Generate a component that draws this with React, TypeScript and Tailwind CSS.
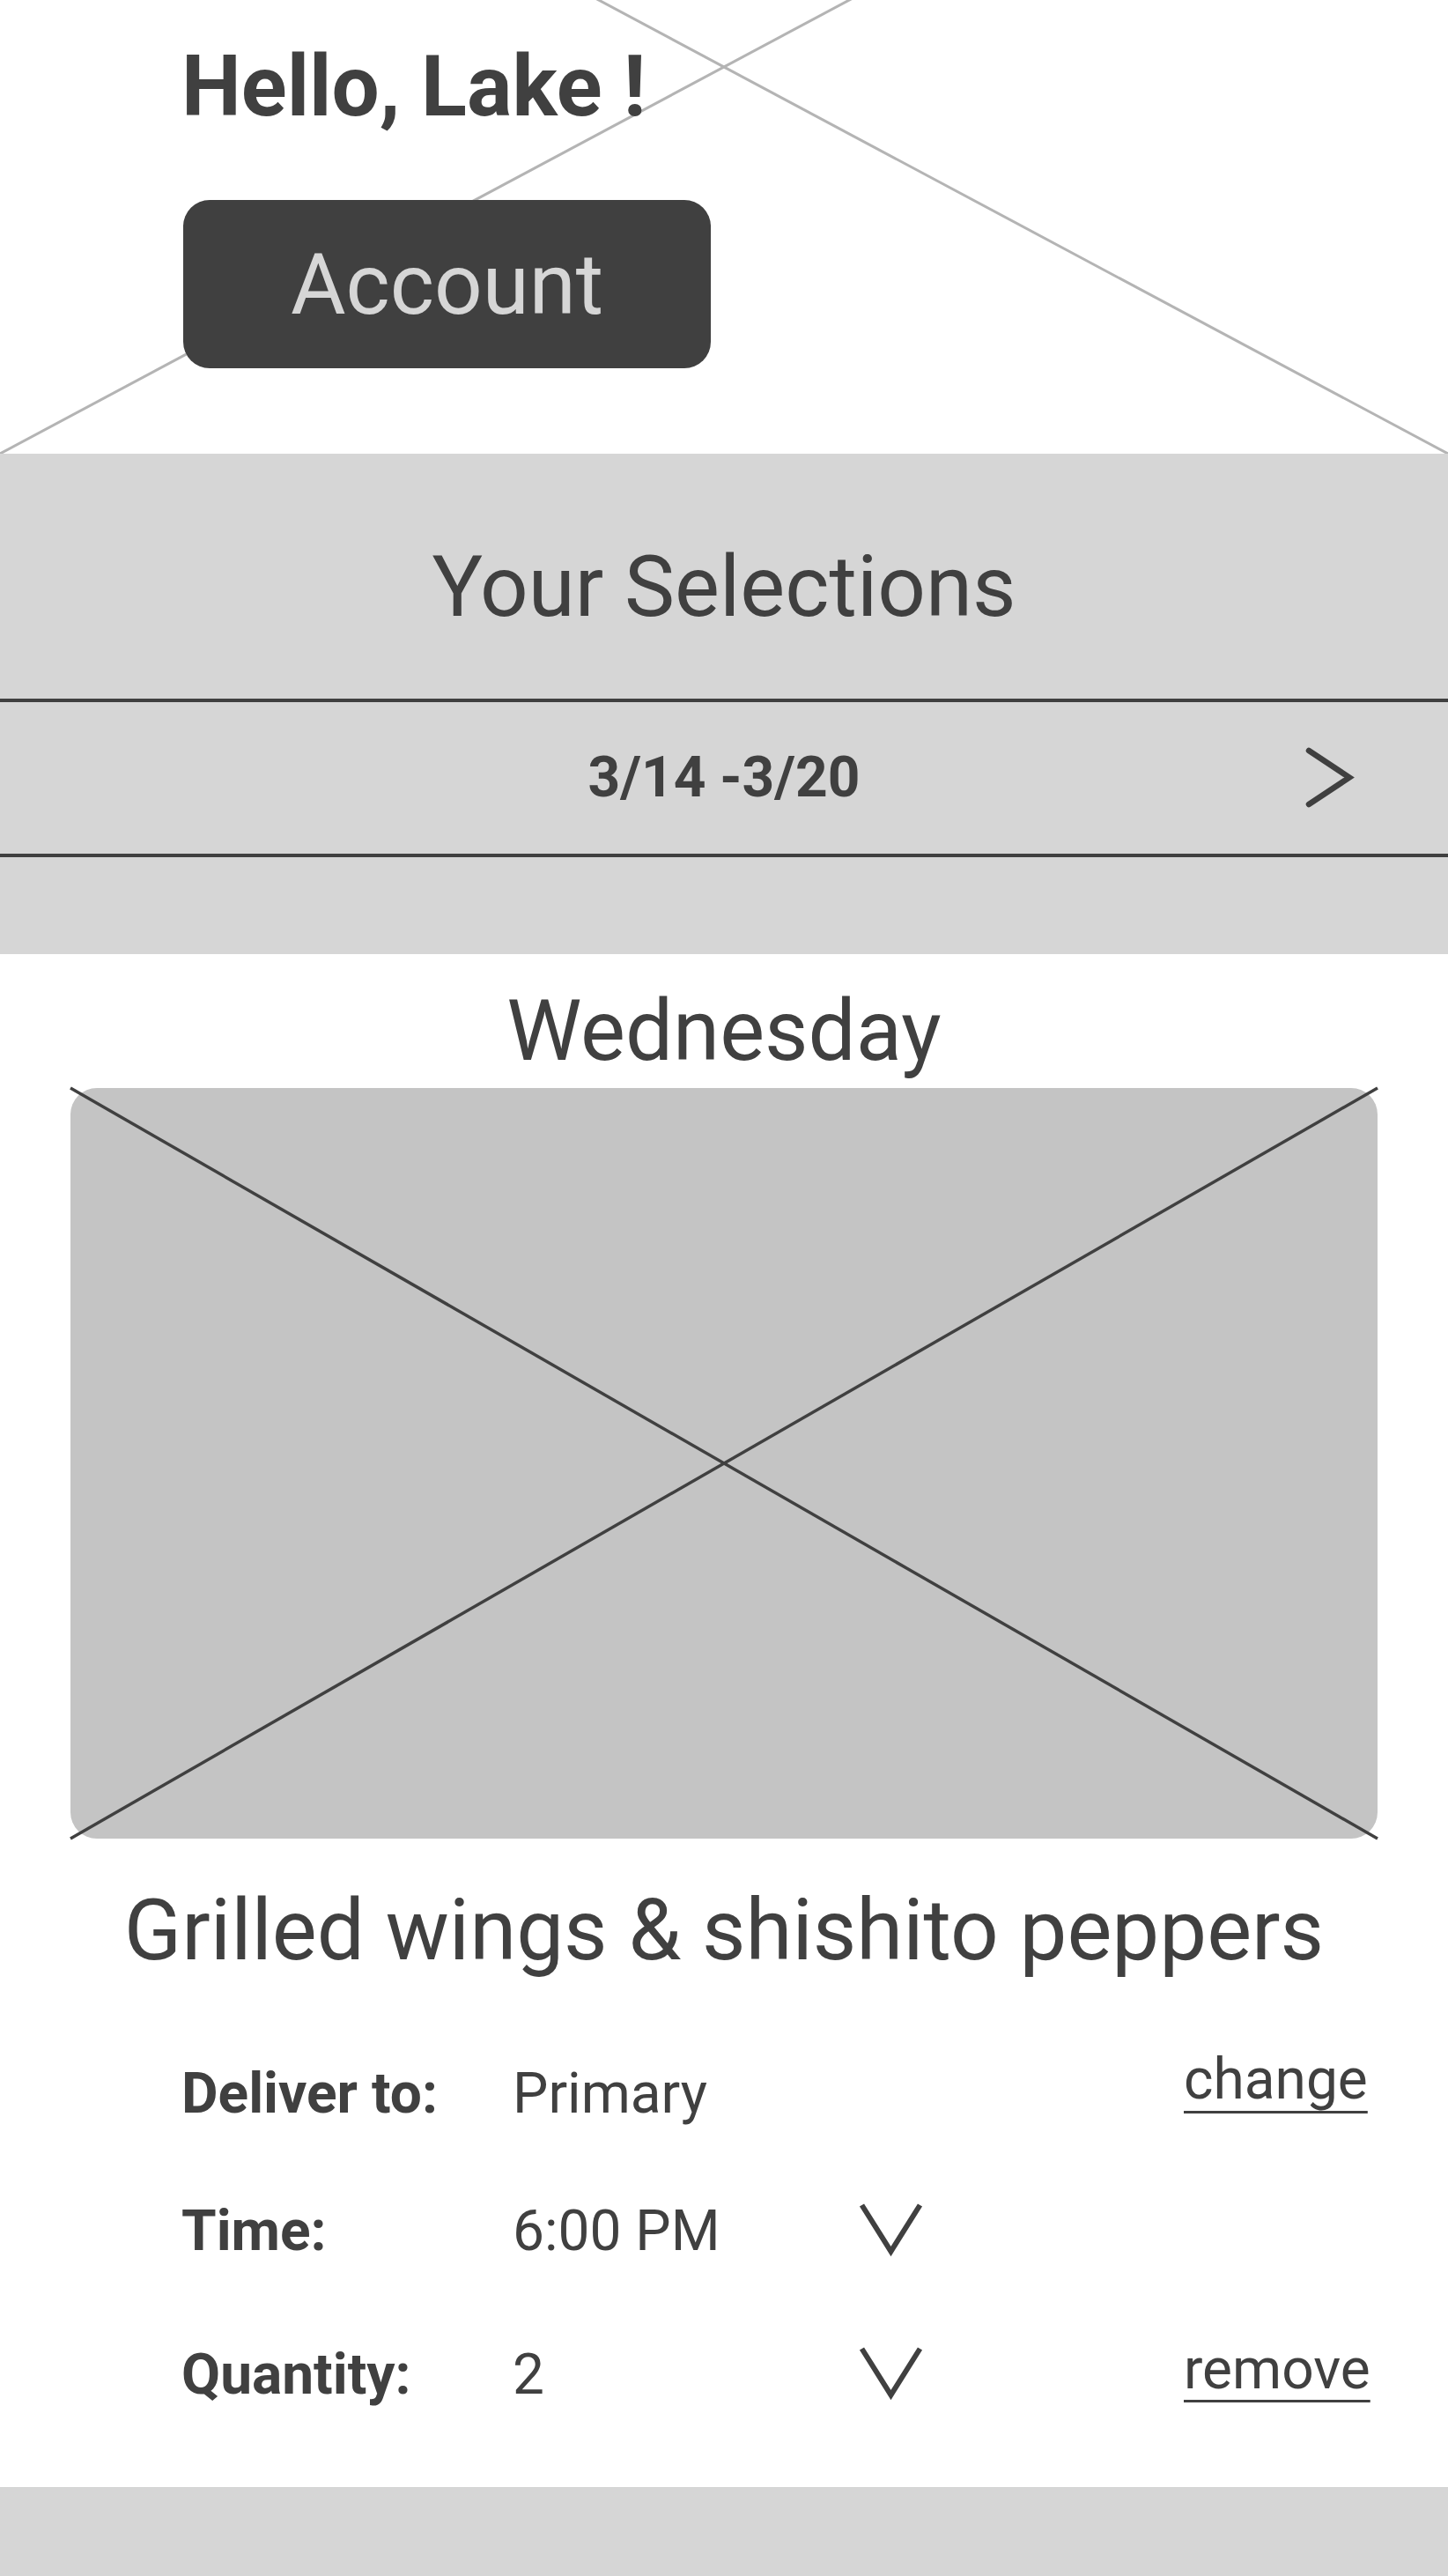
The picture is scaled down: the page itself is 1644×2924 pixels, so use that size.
import React from "react";

const font = { fontFamily: "Roboto, 'Open Sans', sans-serif" };

function ChevronDown() {
  return (
    <svg width="73" height="58" viewBox="0 0 73 58" className="mt-[2px] shrink-0 overflow-visible">
      <polyline points="3.5,0 36.5,52.5 69.5,0" fill="none" stroke="#404040" strokeWidth="6" strokeLinejoin="miter" strokeLinecap="butt" />
    </svg>
  );
}

export default function App() {
  return (
    <div className="w-[1644px] bg-white text-[#404040]" style={font}>
      {/* Header */}
      <div className="relative h-[515px] overflow-hidden bg-white">
        <svg className="absolute inset-0 h-full w-full" viewBox="0 0 1644 515" preserveAspectRatio="none">
          <line x1="0" y1="-363" x2="1644" y2="515" stroke="#b4b4b4" strokeWidth="3" />
          <line x1="1644" y1="-363" x2="0" y2="515" stroke="#b4b4b4" strokeWidth="3" />
        </svg>
        <div className="relative flex flex-col items-start pl-[206px] pt-[50px]">
          <h1 className="text-[96px] font-bold leading-none">Hello, Lake !</h1>
          <button className="ml-[2px] mt-[81px] flex h-[191px] w-[599px] items-center justify-center rounded-[30px] bg-[#404040] text-[96px] leading-none text-[#d6d6d6]">
            Account
          </button>
        </div>
      </div>

      {/* Selections */}
      <div className="flex flex-col bg-[#d6d6d6]">
        <h2 className="pt-[103px] text-center text-[96px] leading-none">Your Selections</h2>
        <div className="mt-[79px] grid h-[180px] grid-cols-[1fr_auto_1fr] items-center border-y-4 border-[#404040]">
          <div />
          <div className="text-[64px] font-bold leading-none">3/14 -3/20</div>
          <div className="flex justify-end">
            <svg width="60" height="76" viewBox="0 0 60 76" className="mr-[104px]">
              <polyline points="6,7 52,37.5 6,68" fill="none" stroke="#404040" strokeWidth="6.5" strokeLinecap="round" strokeLinejoin="miter" />
            </svg>
          </div>
        </div>
        <div className="h-[110px]" />
      </div>

      {/* Day */}
      <div className="flex flex-col">
        <h3 className="mt-[39px] text-center text-[96px] leading-none">Wednesday</h3>
        <div className="relative mx-[80px] mt-[17px] h-[852px] rounded-[30px] bg-[#c4c4c4]">
          <svg className="absolute inset-0 h-full w-full overflow-visible" viewBox="0 0 1484 852" preserveAspectRatio="none">
            <line x1="0" y1="0" x2="1484" y2="852" stroke="#404040" strokeWidth="3.5" />
            <line x1="1484" y1="0" x2="0" y2="852" stroke="#404040" strokeWidth="3.5" />
          </svg>
        </div>
        <h4 className="mt-[56px] text-center text-[96px] leading-none">Grilled wings &amp; shishito peppers</h4>

        <div className="flex flex-col pl-[206px] text-[64px] leading-none">
          <div className="mt-[106px] flex h-[64px] items-start">
            <span className="w-[376px] font-bold">Deliver to:</span>
            <span className="w-[393px]">Primary</span>
            <span className="w-[73px]" />
            <span className="w-[296px]" />
            <a className="-mt-[16px] underline decoration-[3px] underline-offset-[14px]">change</a>
          </div>
          <div className="mt-[92px] flex h-[64px] items-start">
            <span className="w-[376px] font-bold">Time:</span>
            <span className="w-[393px]">6:00 PM</span>
            <ChevronDown />
          </div>
          <div className="mt-[99px] flex h-[64px] items-start">
            <span className="w-[376px] font-bold">Quantity:</span>
            <span className="w-[393px]">2</span>
            <ChevronDown />
            <span className="w-[296px]" />
            <a className="-mt-[6px] underline decoration-[3px] underline-offset-[13px]">remove</a>
          </div>
        </div>

        <div className="mt-[95px] h-[101px] bg-[#d6d6d6]" />
      </div>
    </div>
  );
}
